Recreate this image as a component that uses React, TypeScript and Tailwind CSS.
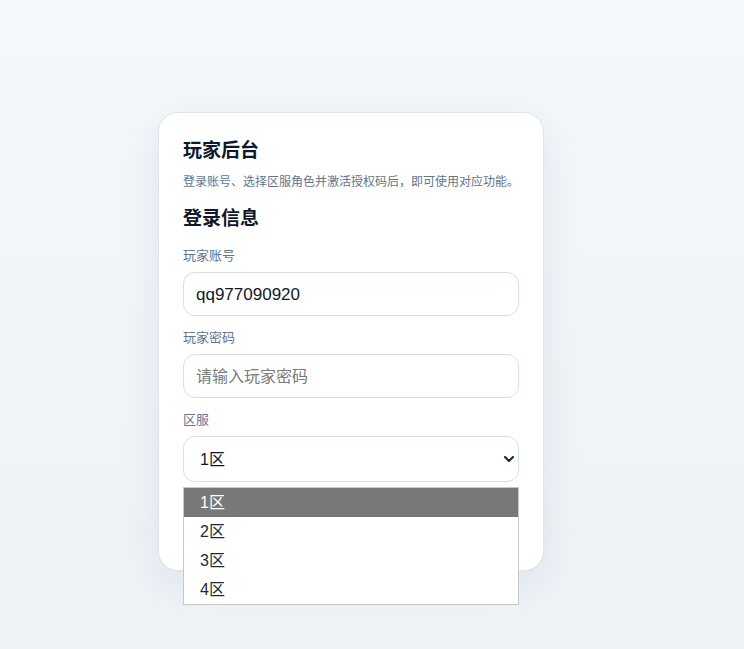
import { useState } from 'react';

const ZONES = ['1区', '2区', '3区', '4区'];

const FONT = '"Liberation Sans", "Noto Sans CJK SC", sans-serif';

export default function App() {
  const [account, setAccount] = useState('qq977090920');
  const [password, setPassword] = useState('');
  const [zone, setZone] = useState('1区');

  return (
    <div
      className="min-h-[649px] w-full bg-gradient-to-b from-[#f4f7fb] to-[#eef2f7] pt-[112px]"
      style={{ fontFamily: FONT }}
    >
      {/* Card */}
      <div className="ml-[158px] w-[386px] rounded-[20px] border border-[#dbe4f0] bg-white px-[24px] pt-[24px] pb-[24px] shadow-[0_12px_40px_rgba(30,50,90,0.08)]">
        <h1 className="text-[19px] leading-[28px] font-bold text-[#0f172a]">玩家后台</h1>
        <p className="mt-[8px] text-[12px] leading-[18px] text-[#64748b]">
          登录账号、选择区服角色并激活授权码后，即可使用对应功能。
        </p>

        <h2 className="mt-[14px] text-[19px] leading-[28px] font-bold text-[#0f172a]">登录信息</h2>

        <label className="mt-[13px] block text-[13px] leading-[20px] text-[#64748b]">玩家账号</label>
        <input
          value={account}
          onChange={(e) => setAccount(e.target.value)}
          className="mt-[6px] block h-[44px] w-full rounded-[12px] border border-[#d3deed] px-[12px] pt-[2px] text-[17px] text-[#0f172a] outline-none"
        />

        <label className="mt-[12px] block text-[13px] leading-[20px] text-[#64748b]">玩家密码</label>
        <input
          type="password"
          value={password}
          onChange={(e) => setPassword(e.target.value)}
          placeholder="请输入玩家密码"
          className="mt-[6px] block h-[44px] w-full rounded-[12px] border border-[#d3deed] px-[12px] pt-[2px] text-[17px] text-[#0f172a] outline-none placeholder:text-[16px] placeholder:text-[#7a7a7a]"
        />

        <label className="mt-[12px] block text-[13px] leading-[20px] text-[#64748b]">区服</label>
        <div className="relative mt-[6px]">
          <select
            value={zone}
            onChange={(e) => setZone(e.target.value)}
            className="block h-[46px] w-full appearance-none rounded-[12px] border border-[#d3deed] bg-white pl-[16px] pt-[1px] text-[16px] text-[#0f172a] outline-none"
          >
            {ZONES.map((z) => (
              <option key={z} value={z}>
                {z}
              </option>
            ))}
          </select>
          <svg
            className="pointer-events-none absolute top-[19px] right-[4px] h-[8px] w-[12px]"
            viewBox="0 0 12 8"
            fill="none"
          >
            <path d="M2 2l4 4 4-4" stroke="#1e293b" strokeWidth="2.2" strokeLinecap="round" strokeLinejoin="round" />
          </svg>

          {/* Open listbox */}
          <div className="absolute top-[51px] left-0 z-10 w-full border border-[#c8c8c8] bg-white">
            {ZONES.map((z) => (
              <div
                key={z}
                className={
                  z === zone
                    ? 'h-[29px] bg-[#787878] pl-[16px] text-[16px] leading-[29px] text-white'
                    : 'h-[29px] pl-[16px] text-[16px] leading-[29px] text-[#1f2937]'
                }
              >
                {z}
              </div>
            ))}
          </div>
        </div>

        <button className="mt-[18px] block h-[46px] w-full rounded-[12px] bg-[#2563eb] text-[16px] text-white">
          登录
        </button>
      </div>
    </div>
  );
}
